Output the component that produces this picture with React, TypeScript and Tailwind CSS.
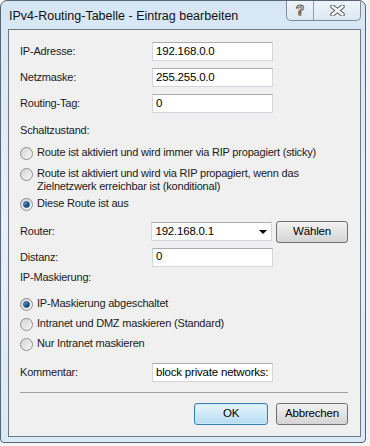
import React from 'react';

const font = { fontFamily: '"Liberation Sans", Arial, sans-serif' };

function Radio({ checked }: { checked?: boolean }) {
  return (
    <span className="relative flex h-[13px] w-[13px] shrink-0 items-center justify-center rounded-full border border-[#8f8f8f] bg-gradient-to-br from-[#d4d4d4] to-[#f7f7f7]">
      {checked && (
        <span className="h-[7px] w-[7px] rounded-full bg-gradient-to-br from-[#7fb6e2] via-[#1f5f98] to-[#0f3a66] border border-[#29547c]" />
      )}
    </span>
  );
}

function TextBox({ value, arrow }: { value: string; arrow?: boolean }) {
  return (
    <div className="flex h-[19px] w-[121px] items-center justify-between overflow-hidden whitespace-nowrap border border-[#d3d7dd] border-t-[#abadb3] bg-white pl-[3px] pr-[4px] text-[11.5px] tracking-[-0.2px] text-black">
      <span>{value}</span>
      {arrow && <span className="h-0 w-0 border-x-[4px] border-t-[4px] border-x-transparent border-t-black" />}
    </div>
  );
}

function Button({ label, primary }: { label: string; primary?: boolean }) {
  return (
    <div
      className={
        primary
          ? 'flex h-[22px] w-[74px] items-center justify-center rounded-[3px] border border-[#3c7fb1] bg-gradient-to-b from-[#e8f5fc] to-[#b5dcf3] text-[11.5px] tracking-[-0.2px] text-black shadow-[inset_0_0_0_1px_#c6e8fa]'
          : 'flex h-[22px] w-[72px] items-center justify-center rounded-[3px] border border-[#707070] bg-gradient-to-b from-[#f2f2f2] to-[#d4d4d4] text-[11.5px] tracking-[-0.2px] text-black'
      }
    >
      {label}
    </div>
  );
}

function FieldRow({ label, children, top }: { label: string; children: React.ReactNode; top: string }) {
  return (
    <div className={`flex items-center ${top}`}>
      <span className="w-[132px] text-[11px] tracking-[-0.2px] text-[#1a1a1a]">{label}</span>
      {children}
    </div>
  );
}

function RadioRow({ label, checked, top }: { label: React.ReactNode; checked?: boolean; top: string }) {
  return (
    <div className={`flex items-start gap-[4px] ${top}`}>
      <span className="mt-[1px]"><Radio checked={checked} /></span>
      <span className="text-[11px] leading-[13px] tracking-[-0.2px] text-[#1a1a1a]">{label}</span>
    </div>
  );
}

export default function App() {
  return (
    <div className="h-[446px] w-[370px] overflow-hidden bg-[#f4f4f4]" style={font}>
      <div className="flex h-[443px] w-[366px] flex-col rounded-t-[7px] rounded-b-[4px] border border-[#566473] bg-gradient-to-b from-[#d6e6f5] via-[#e6f0f9] to-[#d9e9f6]">
        {/* Titelleiste */}
        <div className="flex h-[28px] items-start justify-between">
          <span className="pl-[8px] pt-[6px] text-[12.5px] text-[#111]">IPv4-Routing-Tabelle - Eintrag bearbeiten</span>
          <div className="mr-[4px] flex h-[20px] rounded-b-[5px] border border-t-0 border-[#7d8b99] bg-gradient-to-b from-[#eef4fa] to-[#dce8f3]">
            <div className="flex w-[27px] items-center justify-center border-r border-[#8f9cab] text-[14px] font-bold text-white [-webkit-text-stroke:1px_#5a5a5a]">?</div>
            <div className="flex w-[46px] items-center justify-center">
              <svg width="15" height="11" viewBox="0 0 15 11">
                <path d="M2.5 1.5 L12.5 9.5 M12.5 1.5 L2.5 9.5" stroke="#5a5a5a" strokeWidth="4.5" strokeLinecap="round" />
                <path d="M2.5 1.5 L12.5 9.5 M12.5 1.5 L2.5 9.5" stroke="#ffffff" strokeWidth="2.5" strokeLinecap="round" />
              </svg>
            </div>
          </div>
        </div>

        {/* Inhalt */}
        <div className="ml-[7px] mr-[4px] flex h-[408px] flex-col border border-[#6b7886] bg-[#f0f0f0] pl-[11px] pr-[12px]">
          <FieldRow label="IP-Adresse:" top="mt-[12px]"><TextBox value="192.168.0.0" /></FieldRow>
          <FieldRow label="Netzmaske:" top="mt-[7px]"><TextBox value="255.255.0.0" /></FieldRow>
          <FieldRow label="Routing-Tag:" top="mt-[7px]"><TextBox value="0" /></FieldRow>

          <span className="mt-[9px] text-[11px] tracking-[-0.2px] text-[#1a1a1a]">Schaltzustand:</span>
          <RadioRow top="mt-[7px]" label="Route ist aktiviert und wird immer via RIP propagiert (sticky)" />
          <RadioRow
            top="mt-[7px]"
            label={<>Route ist aktiviert und wird via RIP propagiert, wenn das<br />Zielnetzwerk erreichbar ist (konditional)</>}
          />
          <RadioRow top="mt-[4px]" checked label="Diese Route ist aus" />

          <div className="mt-[10px] flex items-center">
            <span className="w-[132px] text-[11px] tracking-[-0.2px] text-[#1a1a1a]">Router:</span>
            <TextBox value="192.168.0.1" arrow />
            <div className="ml-[4px]"><Button label="Wählen" /></div>
          </div>
          <FieldRow label="Distanz:" top="mt-[5px]"><TextBox value="0" /></FieldRow>

          <span className="mt-[2px] text-[11px] tracking-[-0.2px] text-[#1a1a1a]">IP-Maskierung:</span>
          <RadioRow top="mt-[12px]" checked label="IP-Maskierung abgeschaltet" />
          <RadioRow top="mt-[6px]" label="Intranet und DMZ maskieren (Standard)" />
          <RadioRow top="mt-[6px]" label="Nur Intranet maskieren" />

          <FieldRow label="Kommentar:" top="mt-[12px]"><TextBox value="block private networks:" /></FieldRow>

          <div className="mt-[10px] h-px bg-[#a0a0a0]" />

          <div className="mt-[10px] flex justify-end gap-[8px]">
            <Button label="OK" primary />
            <Button label="Abbrechen" />
          </div>
        </div>
      </div>
    </div>
  );
}
